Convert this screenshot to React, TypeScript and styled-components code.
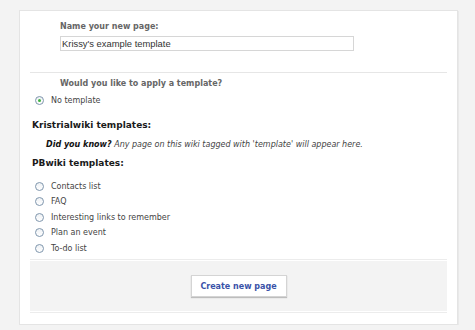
import * as React from 'react'
import styled, { createGlobalStyle } from 'styled-components'

const GlobalStyle = createGlobalStyle`
    html, body {
        margin: 0;
        padding: 0;
        background: #f3f3f3;
    }
    * {
        box-sizing: border-box;
    }
`

const Panel = styled.div`
    width: 439px;
    margin: 10px 0 0 19px;
    padding: 0 10px 11px;
    background: #fff;
    border: 1px solid #e4e4e4;
    box-shadow: 1px 1px 0 #e9e9e9;
    font-family: "DejaVu Sans", Verdana, sans-serif;
`

const NameSection = styled.div`
    padding: 10px 0 21px 30px;
    border-bottom: 1px solid #e6e6e6;
`

const FieldLabel = styled.div`
    font-size: 8px;
    font-weight: bold;
    line-height: 12px;
    color: #666;
`

const NameInput = styled.input`
    display: block;
    width: 294px;
    height: 15px;
    margin-top: 3px;
    padding: 0 1px;
    border: 1px solid #d6d6d6;
    font-family: "Liberation Sans", Arial, sans-serif;
    font-size: 9.4px;
    color: #333;
    outline: none;
`

const Question = styled(FieldLabel)`
    margin: 5px 0 0 30px;
`

const SectionTitle = styled.div<{ $gap: number }>`
    margin-top: ${p => p.$gap}px;
    font-size: 9px;
    font-weight: bold;
    line-height: 14px;
    color: #1a1a1a;
    padding-left: 2px;
`

const Hint = styled.div`
    margin: 7px 0 0 16px;
    font-size: 8px;
    font-style: italic;
    line-height: 12px;
    color: #444;

    strong {
        color: #111;
    }
`

const OptionList = styled.div<{ $gap: number }>`
    margin-top: ${p => p.$gap}px;
    display: flex;
    flex-direction: column;
`

const Option = styled.label`
    display: flex;
    align-items: center;
    gap: 7px;
    height: 15.5px;
    padding-left: 5px;
    font-size: 8px;
    color: #444;
`

const RadioDot = styled.span<{ $checked?: boolean }>`
    position: relative;
    width: 9px;
    height: 9px;
    border-radius: 50%;
    border: 1px solid #7f96ad;
    background: linear-gradient(#eef1f4, #ffffff);
    flex-shrink: 0;

    &::after {
        content: '';
        display: ${p => (p.$checked ? 'block' : 'none')};
        position: absolute;
        left: 2px;
        top: 2px;
        width: 3px;
        height: 3px;
        border-radius: 50%;
        background: #3eb23e;
    }
`

const FooterFrame = styled.div`
    margin-top: 3px;
    padding: 1px 0;
    border-top: 1px solid #ececec;
    border-bottom: 1px solid #ececec;
`

const Footer = styled.div`
    height: 50px;
    background: #f3f3f3;
    display: flex;
    align-items: center;
    justify-content: center;
`

const CreateButton = styled.button`
    width: 96px;
    height: 22px;
    background: #fff;
    border: 1px solid #d4d4d4;
    box-shadow: 0 1px 1px #bdbdbd;
    font-family: "DejaVu Sans", Verdana, sans-serif;
    font-size: 8px;
    font-weight: bold;
    color: #3a52a8;
    padding: 0;
`

const templates = [
    'Contacts list',
    'FAQ',
    'Interesting links to remember',
    'Plan an event',
    'To-do list',
]

const App = () => {
    const [name, setName] = React.useState("Krissy's example template")
    const [choice, setChoice] = React.useState('none')

    return (
        <>
            <GlobalStyle />
            <Panel>
                <NameSection>
                    <FieldLabel>Name your new page:</FieldLabel>
                    <NameInput value={name} onChange={(e) => setName(e.target.value)} />
                </NameSection>
                <Question>Would you like to apply a template?</Question>
                <OptionList $gap={3}>
                    <Option onClick={() => setChoice('none')}>
                        <RadioDot $checked={choice === 'none'} />
                        No template
                    </Option>
                </OptionList>
                <SectionTitle $gap={9}>Kristrialwiki templates:</SectionTitle>
                <Hint>
                    <strong>Did you know?</strong> Any page on this wiki tagged with 'template' will appear here.
                </Hint>
                <SectionTitle $gap={5}>PBwiki templates:</SectionTitle>
                <OptionList $gap={9}>
                    {templates.map(t => (
                        <Option key={t} onClick={() => setChoice(t)}>
                            <RadioDot $checked={choice === t} />
                            {t}
                        </Option>
                    ))}
                </OptionList>
                <FooterFrame>
                    <Footer>
                        <CreateButton>Create new page</CreateButton>
                    </Footer>
                </FooterFrame>
            </Panel>
        </>
    )
}

export default App
